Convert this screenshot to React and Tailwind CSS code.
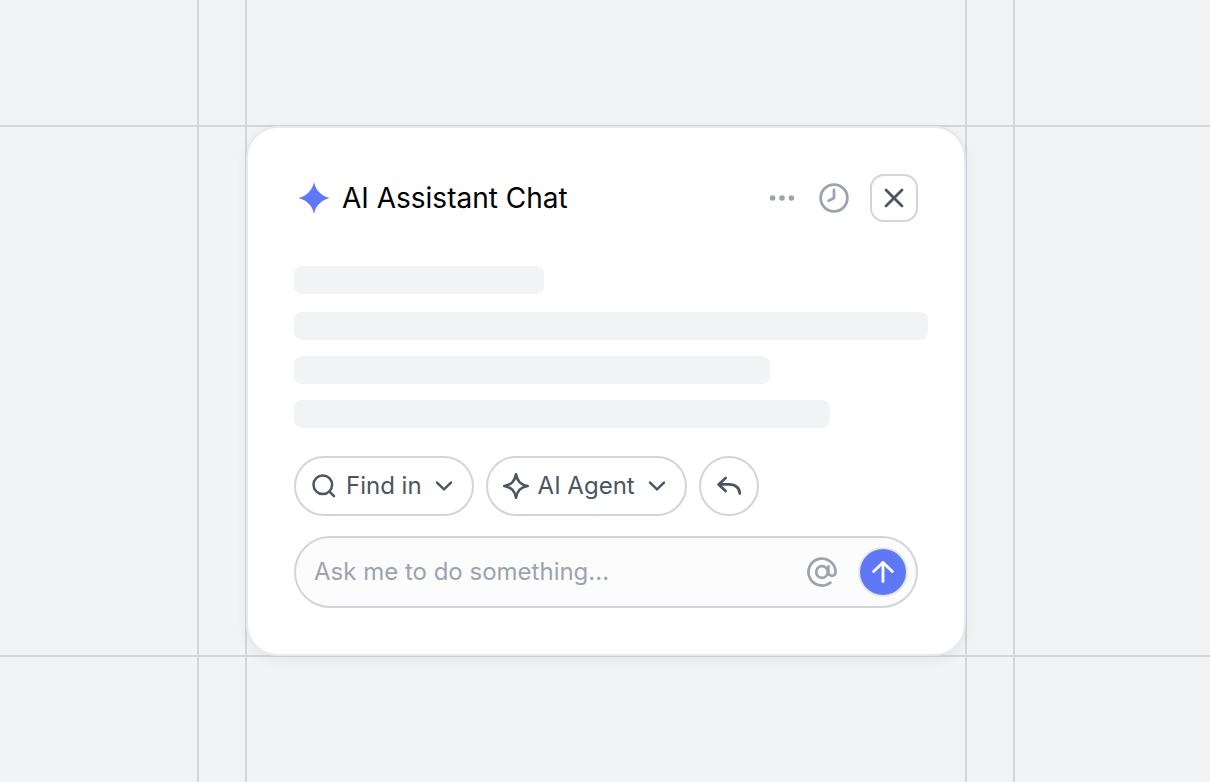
import React, { useState } from 'react';
import { Clock8, X } from 'lucide-react';

const skeletonBars = ['w-[250px] mb-[2px]', 'w-[634px]', 'w-[476px]', 'w-[536px]'];

function SparkFilled() {
    return (
        <svg width="40" height="40" viewBox="-20 -20 40 40" fill="#5f78f5" aria-hidden="true">
            <path d="M0 -16 C1.6 -9.5 3.4 -7.6 5.6 -5.6 C7.6 -3.4 9.8 -1.6 16 0 C9.8 1.6 7.6 3.4 5.6 5.6 C3.4 7.6 1.6 9.5 0 16 C-1.6 9.5 -3.4 7.6 -5.6 5.6 C-7.6 3.4 -9.8 1.6 -16 0 C-9.8 -1.6 -7.6 -3.4 -5.6 -5.6 C-3.4 -7.6 -1.6 -9.5 0 -16 Z" />
        </svg>
    );
}

function SparkOutline() {
    return (
        <svg width="28" height="28" viewBox="-14 -14 28 28" fill="none" stroke="currentColor" strokeWidth="2.6" strokeLinejoin="round" aria-hidden="true">
            <path d="M0 -11.7 C0.9 -7 2 -5.4 3.7 -3.7 C5.4 -2 7 -0.9 11.7 0 C7 0.9 5.4 2 3.7 3.7 C2 5.4 0.9 7 0 11.7 C-0.9 7 -2 5.4 -3.7 3.7 C-5.4 2 -7 0.9 -11.7 0 C-7 -0.9 -5.4 -2 -3.7 -3.7 C-2 -5.4 -0.9 -7 0 -11.7 Z" />
        </svg>
    );
}

function SearchIcon() {
    return (
        <svg width="28" height="28" viewBox="0 0 28 28" fill="none" stroke="currentColor" strokeWidth="2.5" strokeLinecap="round" aria-hidden="true">
            <circle cx="12.8" cy="12.8" r="9.3" />
            <path d="M19.4 19.6 L24 24.2" />
        </svg>
    );
}

function Chevron() {
    return (
        <svg width="24" height="24" viewBox="0 0 24 24" fill="none" stroke="currentColor" strokeWidth="2.4" strokeLinecap="round" aria-hidden="true">
            <path d="M5 8.6 L12 15.4 L19 8.6" />
        </svg>
    );
}

function ReplyIcon() {
    return (
        <svg width="28" height="28" viewBox="0 0 28 28" fill="none" stroke="currentColor" strokeWidth="2.7" strokeLinecap="round" strokeLinejoin="round" aria-hidden="true">
            <path d="M10.6 6 L3.6 12.4 L10.6 19 M3.6 12.4 H14 C20.4 12.4 24.8 16 24.8 21.6" />
        </svg>
    );
}

function MentionIcon() {
    return (
        <svg width="32" height="32" viewBox="0 0 32 32" fill="none" stroke="currentColor" strokeWidth="2.7" strokeLinecap="round" aria-hidden="true">
            <circle cx="16" cy="16" r="5.8" />
            <path d="M22.4 10.4 V16.8 A3.6 3.6 0 0 0 29.5 16.8 V16 A13.5 13.5 0 1 0 24.4 26.6" />
        </svg>
    );
}

function AssistantCard() {
    const [message, setMessage] = useState('');

    const handleSubmit = (e) => {
        e.preventDefault();
        setMessage('');
    };

    return (
        <section className="flex flex-col rounded-[32px] border-2 border-[#e8e9ed] bg-white p-[46px] shadow-[0_4px_12px_rgba(60,60,90,0.07)]">
            <header className="flex items-center justify-between">
                <div className="flex items-center gap-2">
                    <SparkFilled />
                    <h1 className="text-[28px] leading-9 text-black">AI Assistant Chat</h1>
                </div>
                <div className="flex items-center text-[#9ca3af]">
                    <button type="button" aria-label="More options" className="mr-5">
                        <svg width="32" height="32" viewBox="0 0 32 32" fill="currentColor" aria-hidden="true">
                            <circle cx="6.6" cy="16" r="2.8" />
                            <circle cx="16" cy="16" r="2.8" />
                            <circle cx="25.4" cy="16" r="2.8" />
                        </svg>
                    </button>
                    <button type="button" aria-label="History" className="mr-5">
                        <Clock8 size={32} strokeWidth={2.1} />
                    </button>
                    <button type="button" aria-label="Close" className="flex size-12 items-center justify-center rounded-[14px] border-2 border-[#d1d5db] text-[#4b5563]">
                        <X size={32} strokeWidth={2.1} />
                    </button>
                </div>
            </header>

            <div className="mt-11 flex flex-col gap-4">
                {skeletonBars.map((bar) => (
                    <div key={bar} className={`h-7 shrink-0 rounded-lg bg-[#f2f3f5] ${bar}`} />
                ))}
            </div>

            <div className="mt-7 flex gap-3 text-2xl text-[#4b5563]">
                <button type="button" aria-haspopup="menu" className="flex h-15 items-center gap-2 rounded-full border-2 border-[#d1d5db] pr-4 pl-[14px]">
                    <SearchIcon />
                    <span className="mr-[2px]">Find in</span>
                    <Chevron />
                </button>
                <button type="button" aria-haspopup="menu" className="flex h-15 items-center gap-2 rounded-full border-2 border-[#d1d5db] pr-4 pl-[14px]">
                    <SparkOutline />
                    <span className="mr-[2px]">AI Agent</span>
                    <Chevron />
                </button>
                <button type="button" aria-label="Undo" className="flex size-15 items-center justify-center rounded-full border-2 border-[#d1d5db]">
                    <ReplyIcon />
                </button>
            </div>

            <form onSubmit={handleSubmit} className="mt-5 flex h-18 items-center rounded-full border-2 border-[#d1d5db] bg-[#fcfcfd] pr-2 pl-[18px]">
                <input
                    type="text"
                    aria-label="Message"
                    value={message}
                    onChange={(e) => setMessage(e.target.value)}
                    placeholder="Ask me to do something..."
                    className="min-w-0 flex-1 bg-transparent text-2xl text-[#4b5563] outline-none placeholder:text-[#9ca3af]"
                />
                <button type="button" aria-label="Mention" className="mr-5 text-[#9ca3af]">
                    <MentionIcon />
                </button>
                <button type="submit" aria-label="Send" className="flex size-[50px] items-center justify-center rounded-full border-2 border-[#e8e9ed] bg-[#5f78f5] text-white">
                    <svg width="28" height="28" viewBox="0 0 28 28" fill="none" stroke="currentColor" strokeWidth="2.8" strokeLinecap="round" strokeLinejoin="round" aria-hidden="true">
                        <path d="M14 23.6 V4.4 M4.6 13.6 L14 4.4 L23.4 13.6" />
                    </svg>
                </button>
            </form>
        </section>
    );
}

function App() {
    return (
        <main className="grid min-h-screen grid-cols-[1fr_48px_minmax(0,720px)_48px_1fr] grid-rows-[1fr_auto_1fr] overflow-hidden bg-[#f2f3f5] font-['Inter',sans-serif]">
            {/* guide lines */}
            <div className="col-start-2 row-span-3 row-start-1 border-l-2 border-[#d4d6dc]" />
            <div className="col-start-3 row-span-3 row-start-1 border-l-2 border-[#d4d6dc]" />
            <div className="col-start-4 row-span-3 row-start-1 border-l-2 border-[#d4d6dc]" />
            <div className="col-start-5 row-span-3 row-start-1 border-l-2 border-[#d4d6dc]" />
            <div className="col-span-5 col-start-1 row-start-2 -mt-px border-t-2 border-[#d4d6dc]" />
            <div className="col-span-5 col-start-1 row-start-3 -mt-px border-t-2 border-[#d4d6dc]" />

            <div className="z-10 col-start-3 row-start-2 -mr-px ml-px">
                <AssistantCard />
            </div>
        </main>
    );
}

export default App;
